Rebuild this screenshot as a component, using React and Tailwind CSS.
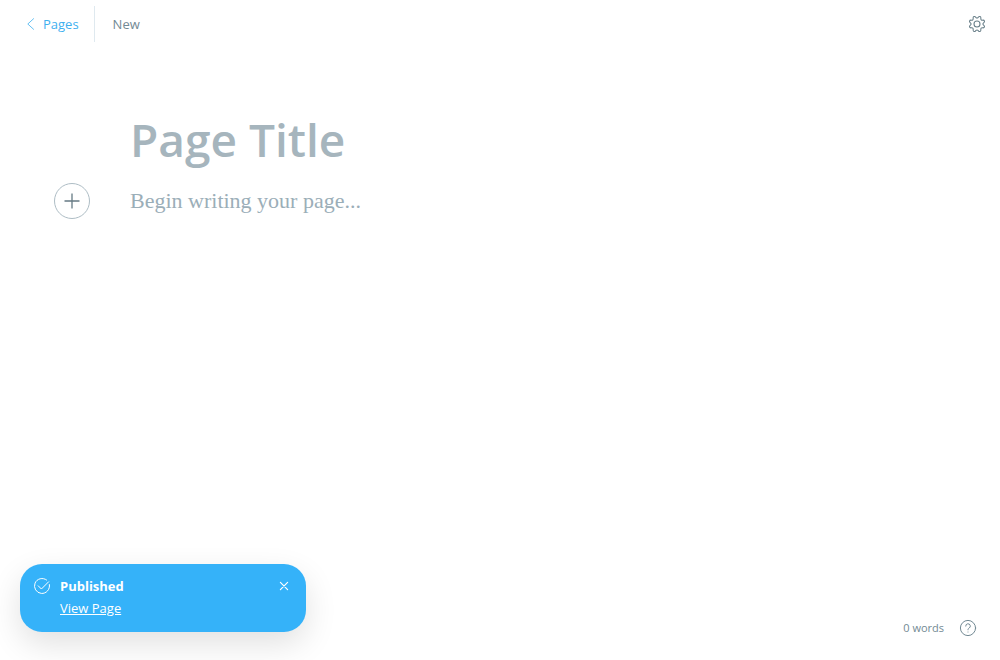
import React from "react";

function ChevronLeft() {
  return (
    <svg viewBox="0 0 8 12" className="h-3 w-2" fill="none" stroke="currentColor" strokeWidth=".8" strokeLinecap="round" strokeLinejoin="round" aria-hidden="true">
      <path d="M6.6.7.8 6l5.8 5.3" />
    </svg>
  );
}

function Gear() {
  return (
    <svg viewBox="0 0 24 24" className="size-4 overflow-visible" fill="none" stroke="currentColor" strokeWidth="1.6" strokeLinecap="round" strokeLinejoin="round" aria-hidden="true">
      <path d="M10.546 2.438a1.957 1.957 0 0 0 2.908 0L14.4 1.4a1.959 1.959 0 0 1 3.41 1.413l-.071 1.4a1.958 1.958 0 0 0 2.051 2.054l1.4-.071a1.959 1.959 0 0 1 1.41 3.41l-1.042.94a1.96 1.96 0 0 0 0 2.909l1.042.94a1.959 1.959 0 0 1-1.413 3.41l-1.4-.071a1.958 1.958 0 0 0-2.056 2.056l.071 1.4A1.959 1.959 0 0 1 14.4 22.6l-.941-1.041a1.959 1.959 0 0 0-2.908 0L9.606 22.6A1.959 1.959 0 0 1 6.2 21.192l.072-1.4a1.958 1.958 0 0 0-2.056-2.056l-1.4.071A1.958 1.958 0 0 1 1.4 14.4l1.041-.94a1.96 1.96 0 0 0 0-2.909L1.4 9.606A1.958 1.958 0 0 1 2.809 6.2l1.4.071a1.958 1.958 0 0 0 2.058-2.06L6.2 2.81A1.959 1.959 0 0 1 9.606 1.4z" />
      <circle cx="12" cy="12" r="4.5" />
    </svg>
  );
}

function Plus() {
  return (
    <svg viewBox="0 0 16 16" className="size-4" fill="none" stroke="currentColor" strokeWidth="1.3" aria-hidden="true">
      <path d="M8 .5v15M.5 8h15" />
    </svg>
  );
}

function CheckCircle() {
  return (
    <svg viewBox="0 0 16 16" className="size-4 overflow-visible" fill="none" stroke="currentColor" strokeLinecap="round" strokeLinejoin="round" aria-hidden="true">
      <path d="m4.2 7.8 3.2 3.2 7.2-7.2" />
      <path d="M15.4 6.6A7.5 7.5 0 1 1 12.6 2" />
    </svg>
  );
}

function Close() {
  return (
    <svg viewBox="0 0 8 8" className="size-2 overflow-visible" fill="none" stroke="currentColor" strokeWidth="1.2" strokeLinecap="round" aria-hidden="true">
      <path d="m.4.4 7.2 7.2M7.6.4.4 7.6" />
    </svg>
  );
}

function Help() {
  return (
    <svg viewBox="0 0 16 16" className="size-4 overflow-visible" fill="none" stroke="currentColor" strokeLinecap="round" strokeLinejoin="round" aria-hidden="true">
      <circle cx="8" cy="8" r="7.6" />
      <path d="M5.7 6.1a2.3 2.3 0 1 1 3.4 2c-.7.4-1.1.8-1.1 1.7" />
      <path d="M8 12h.01" />
    </svg>
  );
}

export default function App() {
  return (
    <div className="relative flex min-h-screen flex-col bg-white font-['Open_Sans','Noto_Sans',sans-serif] text-[13px] text-[#738a94]">
      <header className="flex h-12 items-center justify-between pr-[15px] pl-[27px]">
        <nav className="flex items-center">
          <a href="#pages" className="flex h-9 items-center gap-2 border-r border-[#dfe9ef] pr-[15px] text-[#3eb0ef]">
            <ChevronLeft />
            <span className="pt-0.5">Pages</span>
          </a>
          <span className="pt-0.5 pl-[18px]">New</span>
        </nav>
        <button type="button" aria-label="Settings" className="text-[#6a808a]">
          <Gear />
        </button>
      </header>

      <main className="flex-1 px-[54px] pt-[59px]">
        <input
          aria-label="Page title"
          placeholder="Page Title"
          className="block h-16 w-full pl-[76px] text-[46px] font-semibold outline-none placeholder:text-[#a6b5bd]"
        />
        <div className="flex items-center gap-10 pt-3">
          <button
            type="button"
            aria-label="Add a card"
            className="flex size-9 shrink-0 items-center justify-center rounded-full border border-[#aebdc5] text-[#657a84]"
          >
            <Plus />
          </button>
          <input
            aria-label="Page content"
            placeholder="Begin writing your page..."
            className="h-9 min-w-0 flex-1 font-['Georgia','Liberation_Serif',serif] text-[22px] outline-none placeholder:text-[#9baeb8]"
          />
        </div>
      </main>

      <footer className="flex h-16 items-center justify-end gap-4 pr-6 text-[11px]">
        <span>0 words</span>
        <a href="#help" aria-label="Help">
          <Help />
        </a>
      </footer>

      <aside
        role="status"
        className="absolute bottom-7 left-5 flex w-[286px] items-start rounded-[22px] bg-[#35b2f9] px-3.5 py-3 text-white shadow-[0_12px_32px_rgba(0,0,0,0.12)]"
      >
        <span className="flex h-5 items-center">
          <CheckCircle />
        </span>
        <div className="flex flex-1 flex-col items-start pl-2.5">
          <strong className="leading-5 font-bold">Published</strong>
          <a href="#view" className="leading-6 underline">
            View Page
          </a>
        </div>
        <button type="button" aria-label="Dismiss" className="flex h-5 items-center pr-1">
          <Close />
        </button>
      </aside>
    </div>
  );
}
